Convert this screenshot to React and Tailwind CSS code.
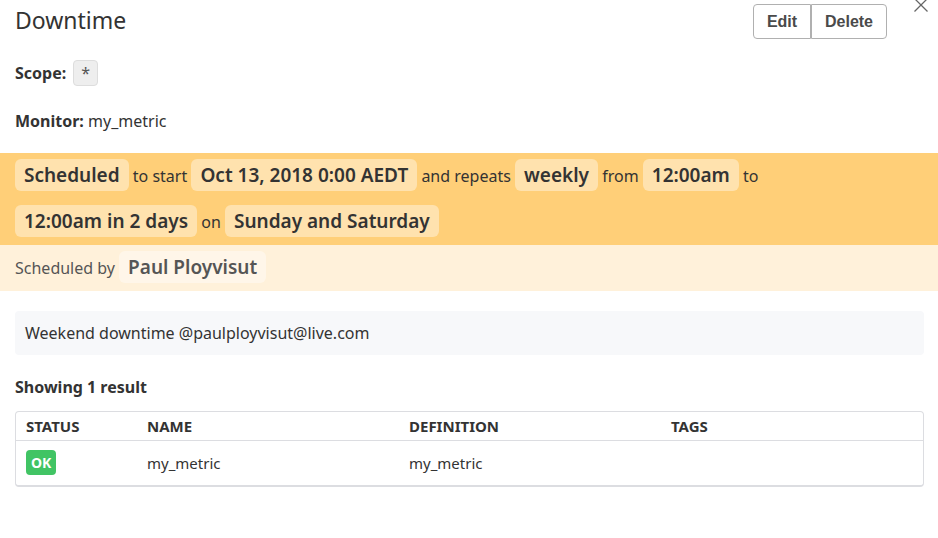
import React from "react";

function Pill({ children }) {
  return (
    <strong className="inline-block rounded-md bg-white/40 px-[9px] text-[19px] leading-8 font-semibold">
      {children}
    </strong>
  );
}

const columns = ["Status", "Name", "Definition", "Tags"];
const rows = [{ status: "OK", name: "my_metric", definition: "my_metric", tags: "" }];

export default function App() {
  return (
    <main className="bg-white text-[16px] text-[#333] [font-family:'Noto_Sans',sans-serif]">
      <header className="flex items-start pl-[15px]">
        <h1 className="mt-1 flex-1 text-[23px] leading-8">Downtime</h1>
        <div className="mt-1 flex [font-family:'Liberation_Sans',sans-serif] text-[16px] font-bold text-[#4a4a4a]">
          <button className="h-[35px] w-[58px] rounded-l border border-[#b0b0b0]">Edit</button>
          <button className="h-[35px] w-[76px] rounded-r border border-[#b0b0b0]">Delete</button>
        </div>
        <button aria-label="Close" className="ml-[26px] pr-[9px]">
          <svg className="size-4" viewBox="0 0 16 16" fill="none" stroke="#666" strokeWidth="1.3">
            <path d="M1.500 -1.500 14.500 11.500M14.500 -1.500 1.500 11.500" />
          </svg>
        </button>
      </header>

      <div className="mt-[21px] flex items-center gap-[7px] px-[15px]">
        <strong>Scope:</strong>
        <span className="rounded-sm border border-[#ddd] bg-[#eee] px-[7px] leading-6 text-[#555]">*</span>
      </div>
      <p className="mt-[23px] px-[15px] leading-6">
        <strong>Monitor:</strong> my_metric
      </p>

      <section className="mt-5">
        <p className="bg-[#ffcf78] pr-[150px] pl-[15px] leading-[46px]">
          <Pill>Scheduled</Pill> to start <Pill>Oct 13, 2018 0:00 AEDT</Pill> and repeats{" "}
          <Pill>weekly</Pill> from <Pill>12:00am</Pill> to <Pill>12:00am in 2 days</Pill> on{" "}
          <Pill>Sunday and Saturday</Pill>
        </p>
        <p className="bg-[#fff1da] px-[15px] leading-[46px] text-[#555]">
          Scheduled by <Pill>Paul Ployvisut</Pill>
        </p>
      </section>

      <div className="pt-5 pr-[14px] pl-[15px]">
        <p className="rounded-sm bg-[#f7f8fa] px-[10px] leading-[44px]">
          Weekend downtime @paulployvisut@live.com
        </p>
        <h2 className="mt-5 leading-6 font-bold">Showing 1 result</h2>
        <div className="mt-3 rounded-sm border border-b-2 border-[#dcdde1]">
          <table className="w-full table-fixed text-left text-[15px]">
            <colgroup>
              <col className="w-[121px]" />
              <col />
              <col />
              <col />
            </colgroup>
            <thead>
              <tr className="h-7 border-b border-[#dcdde1] uppercase">
                {columns.map((column) => (
                  <th key={column} className="px-[10px] font-bold">{column}</th>
                ))}
              </tr>
            </thead>
            <tbody>
              {rows.map((row) => (
                <tr key={row.name} className="h-[45px]">
                  <td className="px-[10px]">
                    <span className="inline-block rounded-sm bg-[#41c464] px-[5px] align-middle text-[14px] leading-[25px] font-bold text-white">
                      {row.status}
                    </span>
                  </td>
                  <td className="px-[10px]">{row.name}</td>
                  <td className="px-[10px]">{row.definition}</td>
                  <td className="px-[10px]">{row.tags}</td>
                </tr>
              ))}
            </tbody>
          </table>
        </div>
      </div>
    </main>
  );
}
